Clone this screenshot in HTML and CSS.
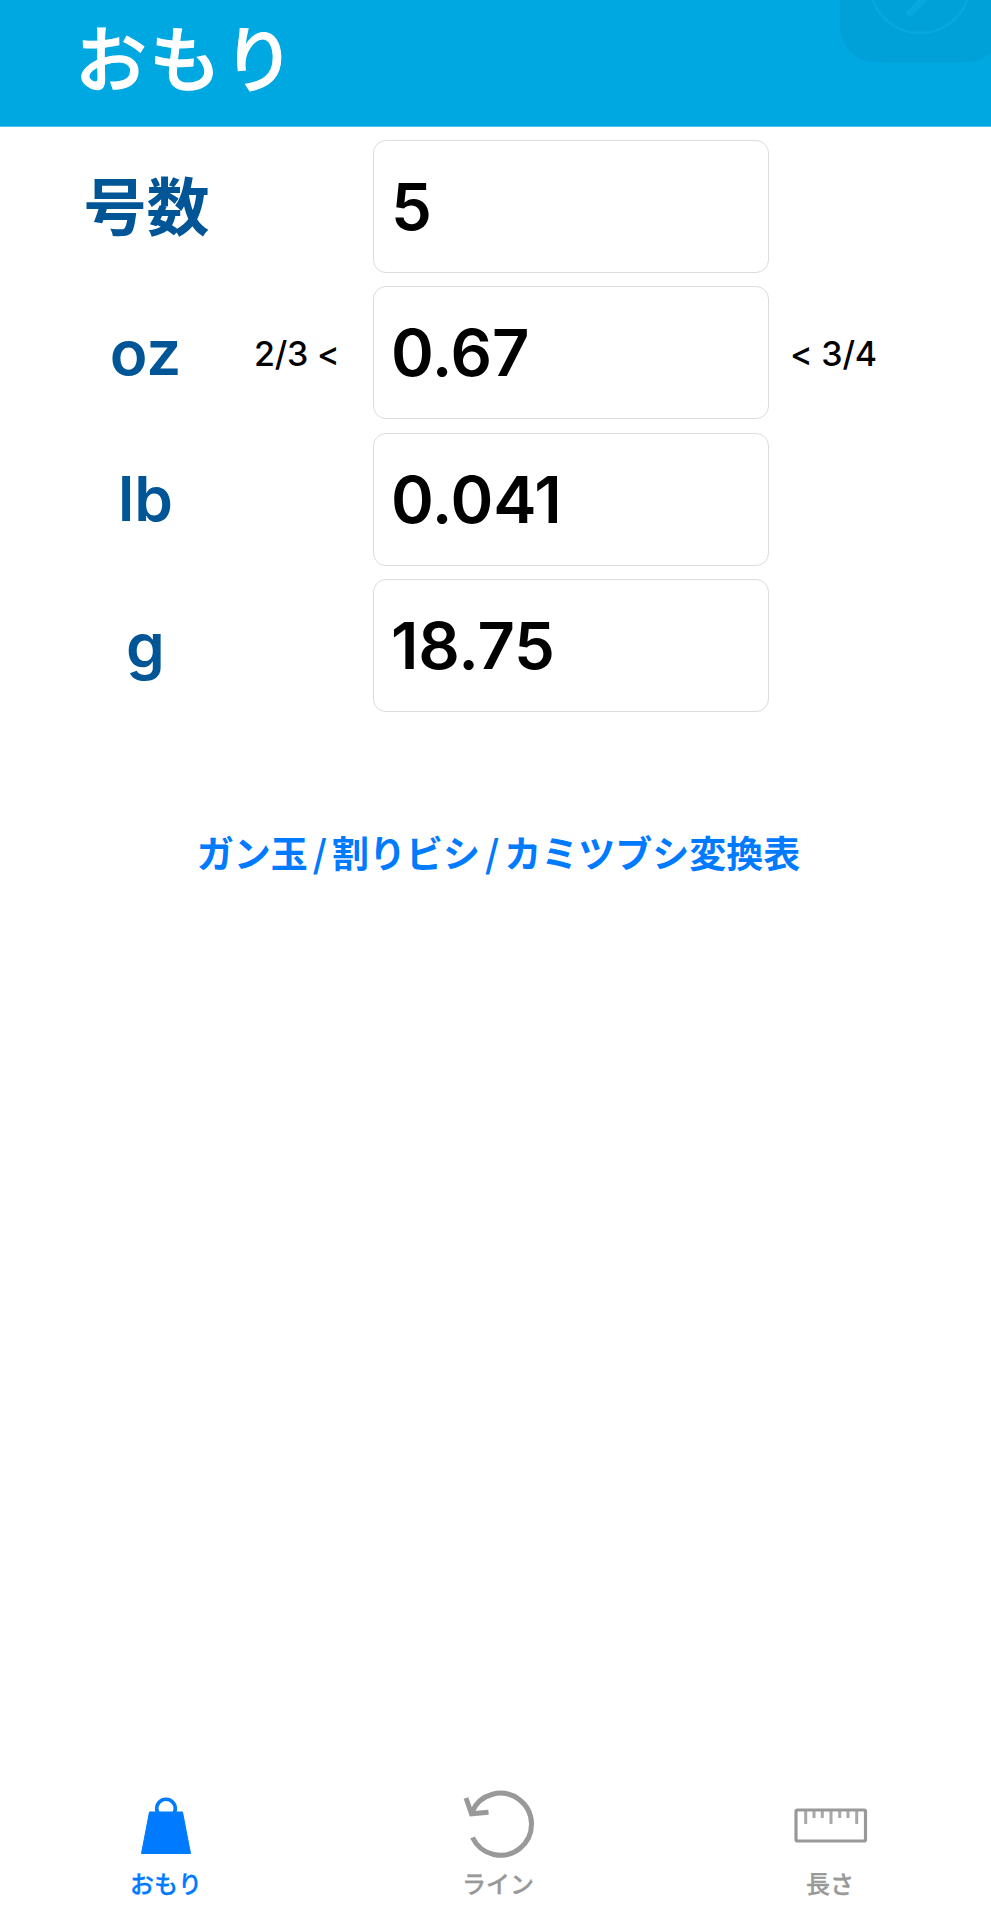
FILE: index.html
```html
<!DOCTYPE html>
<html lang="ja">
<head>
    <meta charset="UTF-8">
    <meta name="viewport" content="width=device-width, initial-scale=1.0">
    <title>おもり</title>
    <link rel="stylesheet" href="styles.css">
</head>
<body>
    <header class="header">
        <h1 class="title">おもり</h1>
        <svg class="badge" width="151" height="64" viewBox="840 0 151 64" fill="none">
            <rect x="840" y="-60" width="162" height="122.5" rx="36" fill="#00a1d9"/>
            <circle cx="920" cy="-17" r="50" stroke="#06a8df" stroke-width="2.5"/>
            <path d="M910 13l18-18" stroke="#06a8df" stroke-width="7" stroke-linecap="round"/>
        </svg>
    </header>

    <main class="main">
        <div class="row">
            <label class="unit kanji" for="gou">号数</label>
            <span class="lower"></span>
            <input class="value" type="text" id="gou" value="5">
            <span class="upper"></span>
        </div>
        <div class="row">
            <label class="unit" for="oz">oz</label>
            <span class="lower">2/3 &lt;</span>
            <input class="value" type="text" id="oz" value="0.67">
            <span class="upper">&lt; 3/4</span>
        </div>
        <div class="row">
            <label class="unit" for="lb">lb</label>
            <span class="lower"></span>
            <input class="value" type="text" id="lb" value="0.041">
            <span class="upper"></span>
        </div>
        <div class="row">
            <label class="unit" for="g">g</label>
            <span class="lower"></span>
            <input class="value" type="text" id="g" value="18.75">
            <span class="upper"></span>
        </div>
        <a class="table-link" href="#">ガン玉<span class="slash">/</span>割りビシ<span class="slash">/</span>カミツブシ変換表</a>
    </main>

    <nav class="tabs">
        <a class="tab active" href="#">
            <svg width="80" height="80" viewBox="0 0 80 80" fill="none" stroke="currentColor">
                <circle cx="40" cy="23.5" r="9.3" stroke-width="3.6"/>
                <path d="M23.5 27h33l8 41.5h-49z" fill="currentColor" stroke-width="1" stroke-linejoin="round"/>
            </svg>
            <span>おもり</span>
        </a>
        <a class="tab" href="#">
            <svg width="80" height="80" viewBox="0 0 80 80" fill="none" stroke="currentColor" stroke-width="5">
                <path d="M14.5 52.5A31 31 0 1 0 14 27"/>
                <path d="M8 13L13.5 28.8L30.5 27.2"/>
            </svg>
            <span>ライン</span>
        </a>
        <a class="tab" href="#">
            <svg width="80" height="80" viewBox="0 0 80 80" fill="none" stroke="currentColor">
                <rect x="6" y="25" width="69.5" height="31" rx="1.5" stroke-width="3.2"/>
                <path d="M15.7 25v14M24 25v8M32.3 25v8M41 25v14M49.7 25v8M58 25v8M66.7 25v14" stroke-width="3" opacity="0.85"/>
            </svg>
            <span>長さ</span>
        </a>
    </nav>
</body>
</html>
```
FILE: styles.css
```css
* {
    box-sizing: border-box;
}

body {
    margin: 0;
    height: 1920px;
    display: flex;
    flex-direction: column;
    background: #fff;
    color: #000;
    font-family: Inter, "Noto Sans CJK JP", sans-serif;
}

a {
    text-decoration: none;
}

/* Header */
.header {
    position: relative;
    display: flex;
    align-items: center;
    height: 127px;
    padding: 0 0 6px 75px;
    background: #00a8e1;
    border-bottom: 1px solid #4abfe8;
}

.title {
    margin: 0;
    color: #fff;
    font-size: 72px;
    font-weight: 500;
    line-height: 1;
    letter-spacing: 2px;
    -webkit-text-stroke: 1px #fff;
}

.badge {
    position: absolute;
    top: 0;
    right: 0;
}

/* Converter rows */
.main {
    flex: 1;
    display: flex;
    flex-direction: column;
    gap: 13px;
    padding-top: 13px;
}

.row {
    display: grid;
    grid-template-columns: 237px 136px 396px 1fr;
    align-items: center;
    height: 133.3px;
}

.unit {
    padding-left: 54px;
    color: #005596;
    font-size: 62px;
    font-weight: 600;
    line-height: 1;
    text-align: center;
}

.kanji {
    padding-top: 2px;
    padding-left: 56px;
    font-size: 63px;
    font-weight: 700;
}

.lower,
.upper {
    padding-top: 2px;
    font-size: 34px;
    font-weight: 500;
    letter-spacing: -0.2px;
    white-space: nowrap;
}

.lower {
    padding-left: 17px;
}

.upper {
    padding-left: 21px;
}

.value {
    width: 396px;
    height: 133px;
    padding: 0 17px;
    border: 1px solid #dcdcdc;
    border-radius: 13px;
    background: #fff;
    color: #000;
    font-family: inherit;
    font-size: 65px;
    font-weight: 600;
    letter-spacing: -0.2px;
}

/* Link to the split shot table */
.table-link {
    align-self: center;
    margin-top: 100px;
    padding-left: 6px;
    color: #007aff;
    font-family: "Noto Sans CJK JP", sans-serif;
    font-size: 37px;
    font-weight: 700;
    line-height: 54px;
    white-space: nowrap;
}

.slash {
    margin: 0 5px;
}

/* Tab bar */
.tabs {
    display: grid;
    grid-template-columns: repeat(3, 332px);
    height: 135px;
    overflow: hidden;
}

.tab {
    display: flex;
    flex-direction: column;
    align-items: center;
    color: #999;
    font-family: "Noto Sans CJK JP", sans-serif;
    font-size: 24px;
    font-weight: 500;
    line-height: 36px;
    -webkit-text-stroke: 0.3px currentColor;
}

.tab.active {
    color: #007aff;
}
```
